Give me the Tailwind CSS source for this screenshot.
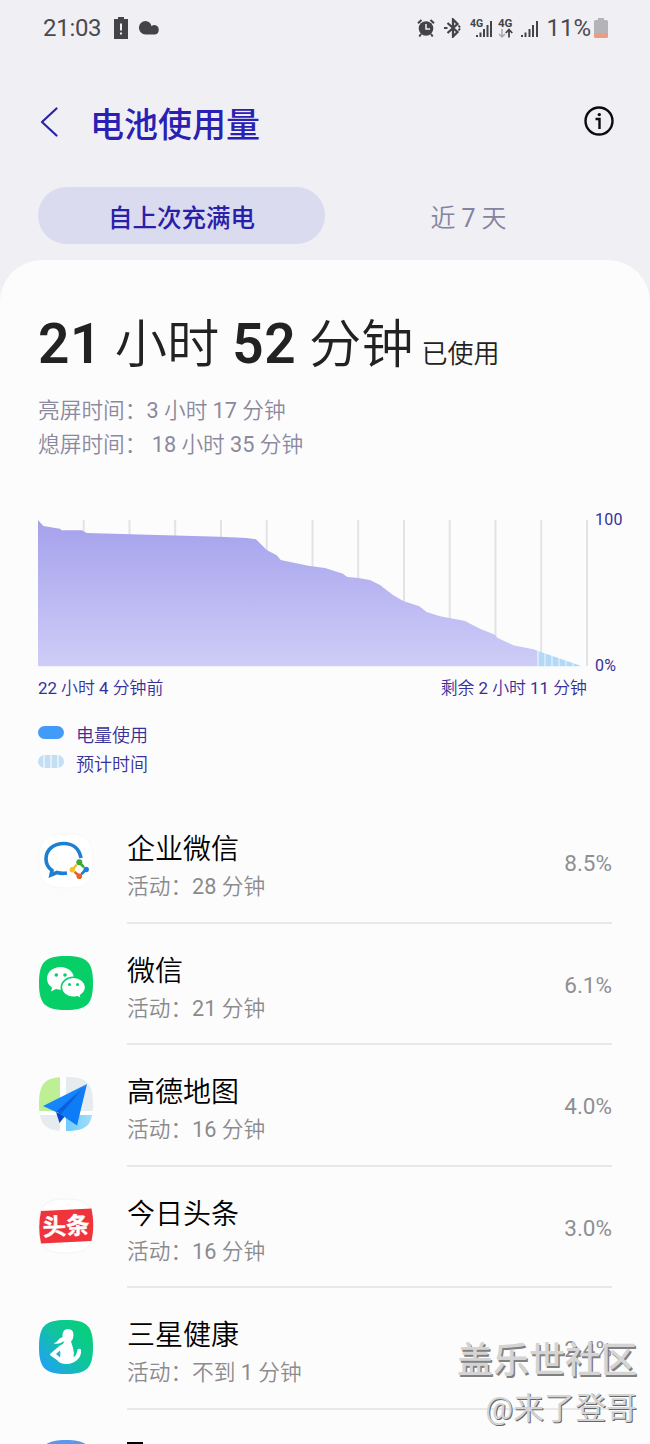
<!DOCTYPE html>
<html lang="zh-CN">
<head>
  <meta charset="UTF-8" />
  <title>电池使用量</title>
  <script src="https://cdn.jsdelivr.net/npm/@tailwindcss/browser@4"></script>
</head>
<body class="bg-[#f0eff4] w-[650px] h-[1444px] overflow-hidden font-['Roboto','Noto_Sans_CJK_SC',sans-serif] text-black">
  <div class="relative w-[650px] h-[1444px] overflow-hidden flex flex-col">

    <!-- Status bar -->
    <div class="h-14 shrink-0 flex items-center justify-between pl-[43px] pr-[42px] text-[#4a4a4e]">
      <div class="flex items-center">
        <span class="text-[24px] leading-none w-[70px] tracking-[-0.3px]">21:03</span>
        <svg class="w-4 h-[22px]" viewBox="0 0 16 22">
          <path fill="#444447" d="M5 0h6v2h4v20H1V2h4z" />
          <path fill="#f0eff4" d="M7 6.5h2v7H7zM7 15.500h2v2H7z" />
        </svg>
        <svg class="w-5 h-[14px] ml-[10px]" viewBox="0 0 20 14">
          <path fill="#444447" d="M6.500 0a6.500 6.500 0 0 1 6 5.200 4.300 4.300 0 0 1 7.200 3.700A4.200 4.200 0 0 1 15.500 13.500H6.500A6.500 6.700 0 0 1 6.500 0z" />
        </svg>
      </div>
      <div class="flex items-center">
        <!-- alarm -->
        <svg class="w-[18px] h-[18px]" viewBox="0 0 18 18" fill="none" stroke="#444447">
          <circle cx="9" cy="9.500" r="7.300" fill="#444447" stroke="none" />
          <path stroke-width="2" d="M1 4.200 4.500 1M17 4.200 13.500 1M4 15l-1.700 2.500M14 15l1.700 2.500" />
          <path stroke="#f0eff4" stroke-width="1.500" d="M9 5v5h4" />
        </svg>
        <!-- bluetooth -->
        <svg class="w-[18px] h-5 ml-[9px]" viewBox="0 0 18 20" fill="none" stroke="#444447" stroke-width="2.300">
          <path d="M3.500 5 13.500 14 9 18.500V1.500L13.500 6 3.500 15" />
          <path d="M0 10h3.500M14.500 7.500l1.500 2M14.500 12.500l1.500-2" stroke-width="2" />
        </svg>
        <!-- SIM 1 -->
        <svg class="w-[23px] h-5 ml-2 overflow-visible" viewBox="0 0 23 20">
          <text x="0" y="8.800" font-size="10.500" font-weight="700" fill="#444447">4G</text>
          <path fill="#444447" d="M6 17h2v2H6zM9.500 14.500h2V19h-2zM13 11h2v8h-2zM16.500 7h2v12h-2zM20 3h2v16h-2z" />
        </svg>
        <!-- SIM 2 -->
        <svg class="w-4 h-5 ml-[5px] overflow-visible" viewBox="0 0 16 20" fill="none">
          <text x="0" y="9.300" font-size="11.500" font-weight="700" fill="#444447">4G</text>
          <path stroke="#a8a8ac" stroke-width="1.500" d="M4 11v8M1 16l3 3 3-3" />
          <path stroke="#444447" stroke-width="1.800" d="M11 19.500v-8M7.800 15l3.200-3.500 3.200 3.500" />
        </svg>
        <svg class="w-[17px] h-5 ml-[7px]" viewBox="0 0 17 20">
          <path fill="#444447" d="M0 17h2v2H0zM3.500 14.500h2V19h-2zM7.500 11h2v8h-2zM11 7h2v12h-2zM15 3h2v16h-2z" />
        </svg>
        <span class="text-[24px] leading-none ml-[8px]">11%</span>
        <svg class="w-[14px] h-5 ml-[3px]" viewBox="0 0 14 20">
          <path fill="#b4b3b7" d="M4 0h6v2h2.500q1.500 0 1.500 1.500V16H0V3.500Q0 2 1.500 2H4z" />
          <path fill="#ef9a83" d="M0 15h14v3.500q0 1.500-1.500 1.500h-11Q0 20 0 18.500z" />
        </svg>
      </div>
    </div>

    <!-- Title bar -->
    <div class="h-[131px] shrink-0 flex items-center pl-10 pr-9">
      <svg class="w-[18px] h-[30px]" viewBox="0 0 18 30" fill="none" stroke="#2a22a8" stroke-width="2.200" stroke-linecap="round" stroke-linejoin="round">
        <path d="M16.500 1.500 2 15l14.500 13.500" />
      </svg>
      <h1 class="ml-8 pt-[7px] text-[34px] leading-none font-medium text-[#2a20b4]">电池使用量</h1>
      <svg class="w-[30px] h-[30px] ml-auto -mt-[2px]" viewBox="0 0 30 30" fill="none" stroke="#0c0c0c" stroke-width="2.400">
        <circle cx="15" cy="15" r="13.500" />
        <path d="M11.500 13h4v10" />
        <circle cx="15.300" cy="8.600" r="1.700" fill="#0c0c0c" stroke="none" />
      </svg>
    </div>

    <!-- Tabs -->
    <div class="h-[73px] shrink-0 flex items-start pl-[38px] pr-[38px]">
      <div class="w-[287px] h-[57px] pt-[7px] rounded-full bg-[#dbdbf0] flex items-center justify-center text-[24.500px] font-medium text-[#2a20a8]">自上次充满电</div>
      <div class="w-[287px] h-[57px] pt-[7px] flex items-center justify-center text-[25px] font-[350] text-[#8583a0] whitespace-pre">近 <span class="font-normal">7</span> 天</div>
    </div>

    <!-- Sheet -->
    <div class="flex-1 bg-[#fcfcfd] rounded-t-[42px] flex flex-col">
      <div class="h-[124px] pt-[48px] pl-[38px] whitespace-pre text-[#222] leading-[72px] text-[52.300px] font-[350] shrink-0"><b class="text-[55px] font-semibold tracking-[0.6px]">21</b> 小时 <b class="text-[55px] font-semibold tracking-[0.6px]">52</b> 分钟<span class="text-[26px] ml-2">已使用</span></div>
      <div class="pl-[38px] pt-[10px] h-[134px] shrink-0 text-[21.700px] leading-[34px] text-[#8b899d] font-[350] whitespace-pre"><p>亮屏时间：<span class="font-normal">3</span> 小时 <span class="font-normal">17</span> 分钟</p><p>熄屏时间： <span class="font-normal">18</span> 小时 <span class="font-normal">35</span> 分钟</p></div>

      <!-- Battery graph -->
      <div class="pl-[38px] flex shrink-0 h-[149px] text-[16px] text-[#37309a]">
        <svg class="w-[550px] h-[149px]" viewBox="38 518 550 149">
          <defs>
            <linearGradient id="usage" x1="0" y1="0" x2="0" y2="1">
              <stop offset="0" stop-color="#a5a1ec" />
              <stop offset="1" stop-color="#cecdf7" />
            </linearGradient>
            <pattern id="stripes" x="537" y="0" width="7" height="10" patternUnits="userSpaceOnUse">
              <rect width="7" height="10" fill="#d0e8fa" />
              <rect x="2" width="5" height="10" fill="#b3d9f7" />
            </pattern>
          </defs>
          <path stroke="#e3e3e5" stroke-width="2" d="M83.700 520V666M129.500 520V666M175.200 520V666M221 520V666M266.700 520V666M312.500 520V666M358.200 520V666M404 520V666M449.700 520V666M495.500 520V666M541.200 520V666M587 520V666" />
          <path fill="url(#usage)" d="M38 520 43.300 526 60 528.700 61.700 530.300 81.700 530.300 86.700 533 220 536.700 246.700 538 256 539.300 266.700 550 276.700 555.300 280.700 560 308.300 565.700 325 568 343 573.700 347.300 577 358.300 578 370 580 380 585 393.300 595.300 403.300 601 419.300 606.300 426.700 612 440 616.300 449.300 618 465 621 480 628.700 495 634.700 497.300 637.700 513.300 645.300 533.300 649.300 537.300 650.700V666.300H38z" />
          <path fill="url(#stripes)" d="M537.300 650.700 582 666.300H537.300z" />
        </svg>
        <div class="flex flex-col justify-between ml-[7px] -my-[7px] leading-[17px] tracking-[0.3px]">
          <span>100</span>
          <span>0%</span>
        </div>
      </div>
      <div class="flex justify-between pl-[38px] pr-[63px] h-[52px] shrink-0 pt-[9px] text-[16.900px] leading-[24px] text-[#37309a] font-[350] whitespace-pre">
        <p><span class="font-normal">22</span> 小时 <span class="font-normal">4</span> 分钟前</p>
        <p>剩余 <span class="font-normal">2</span> 小时 <span class="font-normal">11</span> 分钟</p>
      </div>

      <!-- Legend -->
      <div class="pl-[38px] pt-[2px] h-[83px] shrink-0 text-[18px] leading-[29px] font-[350] text-[#37309a]">
        <div class="flex items-center">
          <span class="w-[26px] h-[13px] rounded-full bg-[#429bf8] mr-3 -mt-[6px]"></span>电量使用
        </div>
        <div class="flex items-center">
          <span class="w-[26px] h-[13px] rounded-full bg-[repeating-linear-gradient(90deg,#c3dff6_0_5px,#e2f0fb_5px_7px)] mr-3 -mt-[6px]"></span>预计时间
        </div>
      </div>

      <!-- App list -->
      <ul class="pl-[38px] pr-[38px] shrink-0">
        <li class="flex h-[121.500px]">
          <svg class="w-14 h-14 mt-[31px] mr-[33px]" viewBox="0 0 56 56">
            <path fill="#fff" stroke="#f8f8f9" d="M28 1C49 1 55 7 55 28S49 55 28 55 1 49 1 28 7 1 28 1z" />
            <path fill="none" stroke="#1c7fd0" stroke-width="3.600" d="M43 25C41 15 34 10.500 26 10.500 15 10.500 8 17 8 26q0 7 6 11.500L13 42l6-2.500q5 1.500 10 .500" />
            <path fill="#fff" d="M41 31l6 5.500-6 6-6-6z" />
            <g stroke-width="2.600" stroke-linecap="round">
              <path stroke="#3aa935" d="M41.300 29.500l4 4" />
              <path stroke="#1c7fd0" d="M48 36.500l-4 4" />
              <path stroke="#e3642b" d="M41.300 43l-4-3.500" />
              <path stroke="#f6bf26" d="M34.500 36.500l3.500-4" />
            </g>
            <circle cx="41.300" cy="29.300" r="3" fill="#3aa935" />
            <circle cx="48.200" cy="36.500" r="2.700" fill="#1c7fd0" />
            <circle cx="41.300" cy="43.300" r="2.800" fill="#e3642b" />
            <circle cx="34.300" cy="36.700" r="2.700" fill="#f6bf26" />
          </svg>
          <div class="flex-1 flex border-b-2 border-[#e8e8ea]">
            <div class="flex-1 pt-[28px]">
              <p class="text-[28px] leading-[39px] font-[350]">企业微信</p>
              <p class="text-[21.700px] leading-[36px] text-[#8b8b8d] font-[350]">活动：<span class="font-normal">28</span> 分钟</p>
            </div>
            <span class="mt-[48px] text-[22.500px] leading-[26px] text-[#8f8f91]">8.5%</span>
          </div>
        </li>
        <li class="flex h-[121.500px]">
          <svg class="w-14 h-14 mt-[31px] mr-[33px]" viewBox="0 0 56 56">
            <path fill="#06cf68" d="M28 1C49 1 55 7 55 28S49 55 28 55 1 49 1 28 7 1 28 1z" />
            <path fill="#fff" d="M22.500 12C15 12 9 17 9 23.500q0 5.500 5 9L13 36.500l5-2.500q2.500.700 4.500.700C30 34.700 36 30 36 23.500S30 12 22.500 12z" />
            <path fill="#fff" stroke="#06cf68" stroke-width="1.500" d="M35.500 22.300C28.500 22.300 23.300 27 23.300 32.300S28.500 42.300 35.500 42.300q2 0 4-.600l4 2.300-.900-3.700q5-3.300 5-8C47.600 27 42.500 22.300 35.500 22.300z" />
            <g fill="#06cf68"><circle cx="18.300" cy="20" r="1.800" /><circle cx="27" cy="20" r="1.800" /><circle cx="31.500" cy="29.500" r="1.500" /><circle cx="39.500" cy="29.500" r="1.500" /></g>
          </svg>
          <div class="flex-1 flex border-b-2 border-[#e8e8ea]">
            <div class="flex-1 pt-[28px]">
              <p class="text-[28px] leading-[39px] font-[350]">微信</p>
              <p class="text-[21.700px] leading-[36px] text-[#8b8b8d] font-[350]">活动：<span class="font-normal">21</span> 分钟</p>
            </div>
            <span class="mt-[48px] text-[22.500px] leading-[26px] text-[#8f8f91]">6.1%</span>
          </div>
        </li>
        <li class="flex h-[121.500px]">
          <svg class="w-14 h-14 mt-[31px] mr-[33px]" viewBox="0 0 56 56">
            <defs>
              <clipPath id="tile"><path d="M28 1C49 1 55 7 55 28S49 55 28 55 1 49 1 28 7 1 28 1z" /></clipPath>
              <linearGradient id="sea" x1="0" x2="1"><stop offset="0" stop-color="#6fcbfa" /><stop offset="1" stop-color="#a5e0fc" /></linearGradient>
            </defs>
            <g clip-path="url(#tile)">
              <path fill="#fff" d="M0 0h56v56H0z" />
              <path fill="#bdf095" d="M0 0h22v35H0z" />
              <path fill="#e6ebf0" d="M28 0h28v35H28zM0 39h22v17H0z" />
              <path fill="url(#sea)" d="M28 39h28v17H28z" />
            </g>
            <path fill="#0b46c4" d="M18 36l3.500 11L27 40z" />
            <path fill="#1485fb" d="M49 8 5 30l14 6.500z" />
            <path fill="#0d7cf6" d="M49 8 22 38l17 11.500z" />
            <path fill="#0a5fdc" d="M49 8 18.500 35.500 22.500 38.500z" />
          </svg>
          <div class="flex-1 flex border-b-2 border-[#e8e8ea]">
            <div class="flex-1 pt-[28px]">
              <p class="text-[28px] leading-[39px] font-[350]">高德地图</p>
              <p class="text-[21.700px] leading-[36px] text-[#8b8b8d] font-[350]">活动：<span class="font-normal">16</span> 分钟</p>
            </div>
            <span class="mt-[48px] text-[22.500px] leading-[26px] text-[#8f8f91]">4.0%</span>
          </div>
        </li>
        <li class="flex h-[121.500px]">
          <svg class="w-14 h-14 mt-[31px] mr-[33px]" viewBox="0 0 56 56">
            <path fill="#fff" stroke="#f3f3f4" d="M28 1C49 1 55 7 55 28S49 55 28 55 1 49 1 28 7 1 28 1z" />
            <path fill="#f0343c" d="M3 13 53.500 10.500Q57 27 53.500 43L3 45.500Q-.500 29 3 13z" />
            <text x="28" y="36.500" text-anchor="middle" font-size="23.500" font-weight="700" fill="#fff" stroke="#fff" stroke-width=".4" transform="rotate(-3 28 28)">头条</text>
          </svg>
          <div class="flex-1 flex border-b-2 border-[#e8e8ea]">
            <div class="flex-1 pt-[28px]">
              <p class="text-[28px] leading-[39px] font-[350]">今日头条</p>
              <p class="text-[21.700px] leading-[36px] text-[#8b8b8d] font-[350]">活动：<span class="font-normal">16</span> 分钟</p>
            </div>
            <span class="mt-[48px] text-[22.500px] leading-[26px] text-[#8f8f91]">3.0%</span>
          </div>
        </li>
        <li class="flex h-[121.500px]">
          <svg class="w-14 h-14 mt-[31px] mr-[33px]" viewBox="0 0 56 56">
            <defs>
              <linearGradient id="health" x1="0" y1=".8" x2=".8" y2=".1"><stop offset="0" stop-color="#1fa2f5" /><stop offset=".55" stop-color="#10c3a0" /><stop offset="1" stop-color="#08cf7c" /></linearGradient>
            </defs>
            <path fill="url(#health)" d="M28 1C49 1 55 7 55 28S49 55 28 55 1 49 1 28 7 1 28 1z" />
            <path fill="#fff" d="M30 10q5.500 0 5.500 6 0 4-2.500 6.500 1 3 2 6.500 1.500 5 .500 9 3-1 4-7.500 2-1.500 3.500 0 .500 5-2 8.500-5 6-13 6-6 0-9-4L12.500 36.500q-1-1 0-2L22 26.500q3.500-1.500 4.500-4-2 0-3 1-3 2-8 1 3-.700 4.500-3.200 1.500-2.300 4.500-3Q24 10 30 10z" />
            <path fill="#1fb0dc" d="M22 31.500 18 35l4 3.500q1-3 0-7z" />
          </svg>
          <div class="flex-1 flex border-b-2 border-[#e8e8ea]">
            <div class="flex-1 pt-[28px]">
              <p class="text-[28px] leading-[39px] font-[350]">三星健康</p>
              <p class="text-[21.700px] leading-[36px] text-[#8b8b8d] font-[350]">活动：不到 <span class="font-normal">1</span> 分钟</p>
            </div>
            <span class="mt-[48px] text-[22.500px] leading-[26px] text-[#8f8f91]">2.4%</span>
          </div>
        </li>
        <li class="flex h-[121.500px]">
          <svg class="w-14 h-14 mt-[29px] mr-[33px]" viewBox="0 0 56 56">
            <path fill="#5b97ea" d="M28 1C49 1 55 7 55 28S49 55 28 55 1 49 1 28 7 1 28 1z" />
          </svg>
          <span class="w-4 h-1 mt-[32px] bg-black"></span>
        </li>
      </ul>
    </div>

    <!-- Watermark -->
    <div class="absolute right-[13px] top-[1336px] text-right text-[#d4d4d4]">
      <p class="text-[36px] leading-[50px] font-medium [text-shadow:1.5px_1.5px_0_#808080]">盖乐世社区</p>
      <p class="text-[31px] leading-[46px] [text-shadow:1px_1px_0_#666]">@来了登哥</p>
    </div>
  </div>
</body>
</html>
